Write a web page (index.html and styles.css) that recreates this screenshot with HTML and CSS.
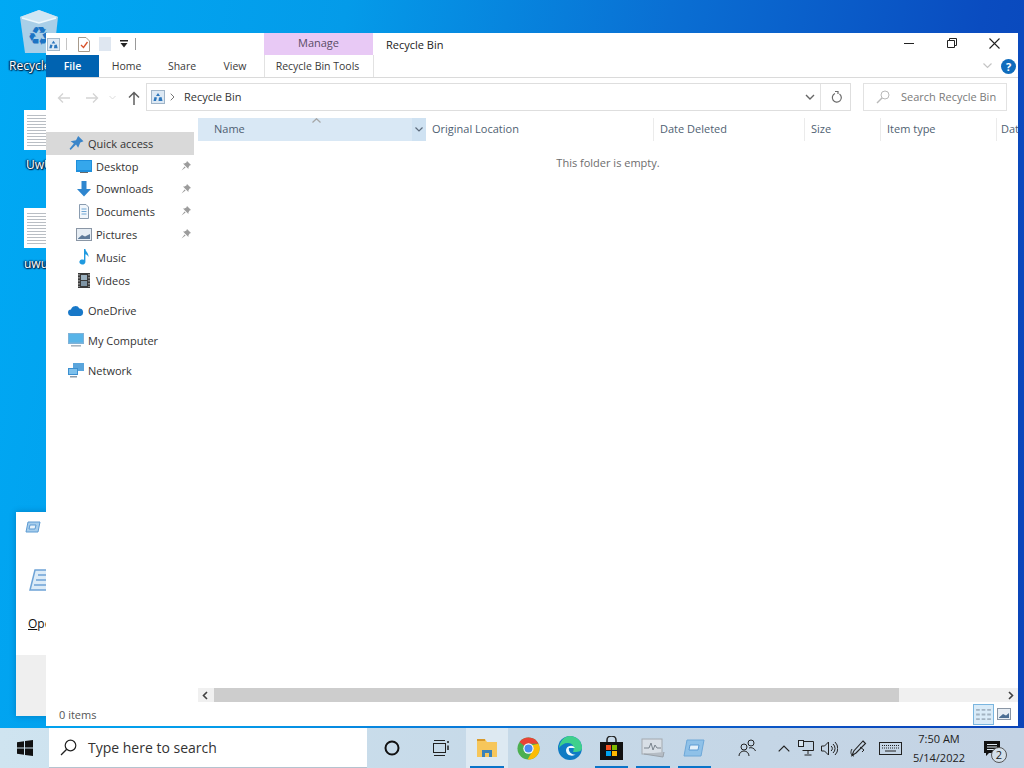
FILE: index.html
```html
<!DOCTYPE html>
<html lang="en">
<head>
    <meta charset="UTF-8">
    <meta name="viewport" content="width=device-width, initial-scale=1.0">
    <title>Recycle Bin</title>
    <link rel="stylesheet" href="styles.css">
</head>
<body>
    <div class="desktop">
        <div class="desk-icon bin-icon">
            <svg width="40" height="46" viewBox="0 0 40 46">
                <path d="M1 8 L20 1 L39 8 L35 44 L6 44 Z" fill="#a9cfe8"/>
                <path d="M1 8 L20 1 L39 8 L20 14 Z" fill="#cfe6f4"/>
                <path d="M3 9 L20 14 L37 9" fill="none" stroke="#eef8fd" stroke-width="1.5"/>
                <text class="bin-glyph" x="20" y="36" text-anchor="middle">♻</text>
            </svg>
            <span class="desk-label">Recycle</span>
        </div>
        <div class="desk-icon doc-one">
            <div class="doc-page"></div>
            <span class="desk-label">UwU</span>
        </div>
        <div class="desk-icon doc-two">
            <div class="doc-page"></div>
            <span class="desk-label">uwu</span>
        </div>

        <div class="dialog">
            <div class="dialog-title">
                <svg width="16" height="12" viewBox="0 0 16 12"><path d="M3 1 H15 L13 11 H1 Z" fill="#a6cdec" stroke="#5d9bd3"/><path d="M5 4 H11 L10 8 H4 Z" fill="#e8f3fb" stroke="#5d9bd3"/></svg>
            </div>
            <div class="dialog-body">
                <svg width="24" height="22" viewBox="0 0 24 22"><path d="M6 1 H24 V21 H1 Z" fill="#dcebf7" stroke="#6ea3d6" stroke-width="1.5"/><path d="M9 6 H24 M7 11 H24 M5 16 H24" stroke="#6ea3d6" stroke-width="1.5"/></svg>
                <p class="dialog-text"><u>O</u>pen</p>
            </div>
            <div class="dialog-footer"></div>
        </div>

        <div class="explorer">
            <div class="title-row">
                <div class="qat">
                    <svg width="13" height="13" viewBox="0 0 14 14"><use href="#mini-bin"/></svg>
                    <span class="qat-sep qat-sep-a"></span>
                    <svg class="qat-props" width="12" height="15" viewBox="0 0 12 15"><path d="M.5.5 H8 L11.5 4 V14.5 H.5 Z" fill="#fff" stroke="#a89b8c"/><path d="M3 8 L5.5 10.5 L9.5 5" fill="none" stroke="#d9532c" stroke-width="1.3"/></svg>
                    <span class="qat-blank"></span>
                    <svg class="qat-drop" width="8" height="8" viewBox="0 0 8 8"><path d="M0 0 H8 V1.4 H0 Z M.5 3 H7.5 L4 7.5 Z" fill="#222"/></svg>
                    <span class="qat-sep qat-sep-b"></span>
                </div>
                <div class="manage-tab">Manage</div>
                <div class="window-title">Recycle Bin</div>
                <div class="window-controls">
                    <svg width="10" height="10" viewBox="0 0 10 10"><path d="M0 5.5 H10" stroke="#222"/></svg>
                    <svg width="10" height="10" viewBox="0 0 10 10"><path d="M.5 2.5 H7.5 V9.5 H.5 Z M2.5 2.5 V.5 H9.5 V7.5 H7.5" fill="none" stroke="#222"/></svg>
                    <svg width="11" height="11" viewBox="0 0 11 11"><path d="M.5 .5 L10.5 10.5 M10.5 .5 L.5 10.5" stroke="#222" stroke-width="1.1"/></svg>
                </div>
            </div>

            <div class="tab-row">
                <div class="file-tab">File</div>
                <div class="tab tab-home">Home</div>
                <div class="tab tab-share">Share</div>
                <div class="tab tab-view">View</div>
                <div class="tools-tab">Recycle Bin Tools</div>
                <div class="tab-right">
                    <svg width="9" height="6" viewBox="0 0 9 6"><path d="M.5 .5 L4.5 4.5 L8.5 .5" fill="none" stroke="#c4c4c4" stroke-width="1.2"/></svg>
                    <span class="help-btn">?</span>
                </div>
            </div>

            <div class="address-row">
                <div class="nav-btns">
                    <svg width="14" height="12" viewBox="0 0 14 12"><path d="M13 6 H2 M6 1.5 L1.5 6 L6 10.5" fill="none" stroke="#d4d4d4" stroke-width="1.4"/></svg>
                    <svg width="14" height="12" viewBox="0 0 14 12"><path d="M1 6 H12 M8 1.5 L12.5 6 L8 10.5" fill="none" stroke="#d4d4d4" stroke-width="1.4"/></svg>
                    <svg width="7" height="5" viewBox="0 0 7 5"><path d="M.5 1 L3.5 4 L6.5 1" fill="none" stroke="#dcdcdc"/></svg>
                    <svg width="12" height="14" viewBox="0 0 12 14"><path d="M6 14 V2 M1 6.5 L6 1.5 L11 6.5" fill="none" stroke="#5f5f5f" stroke-width="1.5"/></svg>
                </div>
                <div class="address-box">
                    <svg width="14" height="14" viewBox="0 0 14 14"><use href="#mini-bin"/></svg>
                    <svg class="crumb-arrow" width="5" height="8" viewBox="0 0 5 8"><path d="M.7 .7 L4 4 L.7 7.3" fill="none" stroke="#777"/></svg>
                    <span class="crumb">Recycle Bin</span>
                    <svg class="address-drop" width="10" height="6" viewBox="0 0 10 6"><path d="M1 1 L5 5 L9 1" fill="none" stroke="#666" stroke-width="1.4"/></svg>
                    <span class="refresh">
                        <svg width="12" height="13" viewBox="0 0 12 13"><path d="M4 2.5 A4.5 4.5 0 1 0 8.5 3 M4 .5 L7 .5 L7 3" transform="translate(0 1)" fill="none" stroke="#6a6a6a" stroke-width="1.2"/></svg>
                    </span>
                </div>
                <div class="search-box">
                    <svg width="14" height="14" viewBox="0 0 14 14"><circle cx="9" cy="5" r="4" fill="none" stroke="#b9b9b9"/><path d="M6 8 L1 13" stroke="#b9b9b9" stroke-width="1.4"/></svg>
                    <span>Search Recycle Bin</span>
                </div>
            </div>

            <div class="main">
                <nav class="sidebar">
                    <div class="nav-item top active">
                        <svg width="16" height="15" viewBox="0 0 14 14"><path d="M9 0 L14 5 L11 6 L9 11 L7 8 L2 13 L1 12 L5 7 L2 5 L7 4 Z" fill="#3a85c9"/></svg>
                        Quick access
                    </div>
                    <div class="nav-item sub">
                        <svg width="16" height="13" viewBox="0 0 16 13"><rect width="16" height="12" fill="#1f8fdc"/><rect x="1" y="1" width="14" height="9" fill="#35a7ec"/><rect x="4" y="12" width="8" height="1" fill="#6a6a6a"/></svg>
                        Desktop
                        <svg class="pin" width="10" height="10" viewBox="0 0 10 10"><use href="#pin"/></svg>
                    </div>
                    <div class="nav-item sub">
                        <svg width="16" height="16" viewBox="0 0 16 16"><path d="M5.5 0 H10.5 V8 H15 L8 15.5 L1 8 H5.5 Z" fill="#2e86cf"/></svg>
                        Downloads
                        <svg class="pin" width="10" height="10" viewBox="0 0 10 10"><use href="#pin"/></svg>
                    </div>
                    <div class="nav-item sub">
                        <svg width="16" height="15" viewBox="0 0 16 15"><path d="M3.5 .5 H10 L12.5 3 V14.5 H3.5 Z" fill="#f1f6fb" stroke="#8a9cb0"/><path d="M5.5 5 H10.5 M5.5 7.5 H10.5 M5.5 10 H10.5" stroke="#6fa5d3"/></svg>
                        Documents
                        <svg class="pin" width="10" height="10" viewBox="0 0 10 10"><use href="#pin"/></svg>
                    </div>
                    <div class="nav-item sub">
                        <svg width="16" height="13" viewBox="0 0 16 13"><rect x=".5" y=".5" width="15" height="12" fill="#e6edf4" stroke="#8a96a5"/><path d="M2 10.5 L6 7 L9 8.5 L14 6 V11 H2 Z" fill="#5e7a99"/></svg>
                        Pictures
                        <svg class="pin" width="10" height="10" viewBox="0 0 10 10"><use href="#pin"/></svg>
                    </div>
                    <div class="nav-item sub">
                        <svg width="16" height="16" viewBox="0 0 16 16"><path d="M8 0 H9.4 C9.6 3 13 4 12.4 8 C11.6 6 10.5 5.4 9.4 5.2 V13 A3 2.6 0 1 1 8 10.8 Z" fill="#1f9ae0"/></svg>
                        Music
                    </div>
                    <div class="nav-item sub">
                        <svg width="16" height="15" viewBox="0 0 16 15"><rect x="2" width="12" height="15" fill="#3a3a3a"/><rect x="5" y="2" width="6" height="5" fill="#9ab0bf"/><rect x="5" y="8" width="6" height="5" fill="#7f95a5"/><path d="M3 1 V14 M13 1 V14" stroke="#ccc" stroke-dasharray="1.5 1.5"/></svg>
                        Videos
                    </div>
                    <div class="nav-item top group">
                        <svg width="16" height="11" viewBox="0 0 16 11"><path d="M3.5 11 A3.2 3.2 0 0 1 3 4.6 A4.5 4.5 0 0 1 11.4 3.6 A3.8 3.8 0 0 1 12.5 11 Z" fill="#1878c8"/></svg>
                        OneDrive
                    </div>
                    <div class="nav-item top group">
                        <svg width="16" height="15" viewBox="0 0 16 15"><rect width="16" height="11" fill="#7fb2d8"/><rect x="1" y="1" width="14" height="8.5" fill="#58b4e8"/><rect x="3" y="12" width="10" height="1.6" fill="#a8b5c0"/></svg>
                        My Computer
                    </div>
                    <div class="nav-item top group">
                        <svg width="16" height="15" viewBox="0 0 16 15"><rect x="5" y="0" width="11" height="8" fill="#5aa5dc"/><rect x="0" y="5" width="10" height="7" fill="#3c8fd0"/><rect x="1" y="6" width="8" height="5" fill="#7cc0ec"/><rect x="2" y="13" width="7" height="1.5" fill="#8a9aa8"/></svg>
                        Network
                    </div>
                </nav>

                <div class="pane">
                    <div class="col-head">
                        <div class="col col-name">
                            <span>Name</span>
                            <span class="col-drop">
                                <svg width="8" height="5" viewBox="0 0 8 5"><path d="M.5 .5 L4 4 L7.5 .5" fill="none" stroke="#5c6b7c" stroke-width="1.2"/></svg>
                            </span>
                            <svg class="sort-caret" width="9" height="5" viewBox="0 0 9 5"><path d="M.5 4.5 L4.5 .7 L8.5 4.5" fill="none" stroke="#a6a6a6" stroke-width="1.2"/></svg>
                        </div>
                        <div class="col col-loc">Original Location</div>
                        <div class="col col-date">Date Deleted</div>
                        <div class="col col-size">Size</div>
                        <div class="col col-type">Item type</div>
                        <div class="col col-more">Dat</div>
                    </div>
                    <div class="pane-body">This folder is empty.</div>
                    <div class="h-scroll">
                        <svg width="6" height="9" viewBox="0 0 6 9"><path d="M5 1 L1.5 4.5 L5 8" fill="none" stroke="#404040" stroke-width="1.6"/></svg>
                        <div class="h-track"><div class="h-thumb"></div></div>
                        <svg width="6" height="9" viewBox="0 0 6 9"><path d="M1 1 L4.5 4.5 L1 8" fill="none" stroke="#404040" stroke-width="1.6"/></svg>
                    </div>
                </div>
            </div>

            <div class="status-row">
                <span>0 items</span>
                <div class="view-btns">
                    <span class="view-btn selected">
                        <svg width="15" height="13" viewBox="0 0 16 14"><path d="M0 2 H4 M6 2 H10 M12 2 H16 M0 7 H4 M6 7 H10 M12 7 H16 M0 12 H4 M6 12 H10 M12 12 H16" stroke="#a3b4c2" stroke-width="2"/></svg>
                    </span>
                    <span class="view-btn small">
                        <svg width="14" height="12" viewBox="0 0 14 12"><rect x=".5" y=".5" width="13" height="11" fill="#e8eef4" stroke="#8a96a5"/><path d="M2 9.5 L6 6 L9 7.5 L12 5 V10 H2 Z" fill="#4d6f94"/></svg>
                    </span>
                </div>
            </div>
        </div>

        <div class="taskbar">
            <div class="start">
                <svg width="16" height="16" viewBox="0 0 16 16"><path d="M0 2.2 L7 1.2 V7.5 H0 Z M8 1 L16 0 V7.5 H8 Z M0 8.5 H7 V14.8 L0 13.8 Z M8 8.5 H16 V16 L8 15 Z" fill="#111"/></svg>
            </div>
            <div class="task-search">
                <svg width="17" height="17" viewBox="0 0 17 17"><circle cx="10.5" cy="6.5" r="5.3" fill="none" stroke="#222" stroke-width="1.2"/><path d="M6.7 10.3 L1 16" stroke="#222" stroke-width="1.3"/></svg>
                <span>Type here to search</span>
            </div>
            <div class="task-btn wide">
                <svg width="16" height="16" viewBox="0 0 16 16"><circle cx="8" cy="8" r="6.5" fill="none" stroke="#111" stroke-width="2"/></svg>
            </div>
            <div class="task-btn view">
                <svg width="17" height="16" viewBox="0 0 17 16"><path d="M2 .5 H13 M2 15.5 H13" stroke="#222"/><rect x="1.5" y="3.5" width="12" height="9" fill="none" stroke="#222"/><path d="M16 1 V3 M16 5.5 V10" stroke="#222" stroke-width="1.5"/></svg>
            </div>
            <div class="task-btn app active">
                <svg width="22" height="20" viewBox="0 0 22 20"><path d="M1 1 H9 L11 4 H21 V19 H1 Z" fill="#f6c65b"/><rect x="1" y="1" width="8" height="2" fill="#d89a2c"/><path d="M6 19 V12 H16 V19 H13 V15 H9 V19 Z" fill="#3a82b8"/></svg>
            </div>
            <div class="task-btn app">
                <svg width="23" height="23" viewBox="0 0 24 24"><circle cx="12" cy="12" r="11.5" fill="#4caf50"/><path d="M12 .5 A11.5 11.5 0 0 1 22.4 7 H12 A5 5 0 0 0 7.7 9.5 L2.6 5.2 A11.5 11.5 0 0 1 12 .5 Z" fill="#e94335"/><path d="M22.4 7 A11.5 11.5 0 0 1 11 23.4 L16.2 14.6 A5 5 0 0 0 15.5 8.5 Z" fill="#fbbc05"/><circle cx="12" cy="12" r="5.4" fill="#fff"/><circle cx="12" cy="12" r="4.2" fill="#4a8bf0"/></svg>
            </div>
            <div class="task-btn app">
                <svg width="24" height="24" viewBox="0 0 24 24"><circle cx="12" cy="12" r="12" fill="#0f7bc4"/><path d="M12 0 A12 12 0 0 1 24 12 C24 16 19 16 15 16 C17 12 15 7 10 7 C6 7 3 9 1 12 C2 5 6 0 12 0 Z" fill="#3fd08c"/><path d="M8 14 A5 5 0 0 1 17 12 H11 C10 15 13 19 18 18.6 C14 21 8 19.5 8 14 Z" fill="#eef9ff"/></svg>
            </div>
            <div class="task-btn app running">
                <svg width="23" height="24" viewBox="0 0 23 24"><path d="M7 6 V4 A4.5 4 0 0 1 16 4 V6" fill="none" stroke="#222" stroke-width="1.5"/><rect y="6" width="23" height="18" fill="#111"/><rect x="6" y="9" width="5" height="5" fill="#f25022"/><rect x="12" y="9" width="5" height="5" fill="#7fba00"/><rect x="6" y="15" width="5" height="5" fill="#00a4ef"/><rect x="12" y="15" width="5" height="5" fill="#ffb900"/></svg>
            </div>
            <div class="task-btn app running">
                <svg width="24" height="22" viewBox="0 0 24 22"><rect x="1" y="2" width="20" height="15" fill="#d8dfe6" stroke="#a4aab0"/><path d="M3 11 H8 L10 6 L12 13 L14 8 L16 11 H20" fill="none" stroke="#7a848e"/><path d="M3 17 L22 20 L23 15" fill="#b5bcc4" stroke="#9aa2aa"/></svg>
            </div>
            <div class="task-btn app running">
                <svg width="22" height="18" viewBox="0 0 22 18"><path d="M4 1 H21 L18 17 H1 Z" fill="#8fc1e8" stroke="#6ea8d8"/><path d="M7 6 H16 L15 11 H6 Z" fill="#e5f1fa" stroke="#5d9bd3"/></svg>
            </div>
            <div class="tray">
                <svg class="tray-people" width="18" height="18" viewBox="0 0 18 18"><circle cx="6" cy="8" r="3" fill="none" stroke="#222"/><path d="M1 17 A5 5 0 0 1 11 17" fill="none" stroke="#222"/><circle cx="13" cy="4" r="3" fill="none" stroke="#222"/><path d="M11 9 A5 5 0 0 1 17.5 12" fill="none" stroke="#222"/></svg>
                <svg class="tray-chev" width="12" height="7" viewBox="0 0 12 7"><path d="M.7 6.3 L6 1 L11.3 6.3" fill="none" stroke="#222" stroke-width="1.2"/></svg>
                <svg class="tray-net" width="16" height="16" viewBox="0 0 16 16"><path d="M4.5 1.5 H15.5 V10.5 H4.5" fill="none" stroke="#222"/><rect x=".5" y=".5" width="5" height="6" fill="#d7e5f0" stroke="#222"/><path d="M10 10.5 V14 M6.5 15 H13.5" stroke="#222"/></svg>
                <svg class="tray-vol" width="17" height="15" viewBox="0 0 17 15"><path d="M.5 5 H3.5 L7.5 1 V14 L3.5 10 H.5 Z" fill="none" stroke="#222"/><path d="M10 5 A3 3 0 0 1 10 10 M12 3 A6 6 0 0 1 12 12 M14 1 A9 9 0 0 1 14 14" fill="none" stroke="#222"/></svg>
                <svg class="tray-pen" width="17" height="17" viewBox="0 0 17 17"><path d="M13 1 L15.5 3.5 L6 13 L2 15.5 L3.8 11 Z" fill="none" stroke="#222" stroke-width="1.1"/><path d="M2 9 C0 12 1 16 4 16 M10 7 L14 10 L12 12" fill="none" stroke="#222"/></svg>
                <svg class="tray-keys" width="23" height="13" viewBox="0 0 23 13"><rect x=".5" y=".5" width="22" height="12" fill="none" stroke="#222"/><path d="M3 3.5 H20 M3 6 H20" stroke="#222" stroke-dasharray="1 1"/><path d="M6 9 H17" stroke="#222"/></svg>
                <div class="clock">
                    <span>7:50 AM</span>
                    <span>5/14/2022</span>
                </div>
                <div class="action-center">
                    <svg width="16" height="15" viewBox="0 0 16 15"><path d="M0 0 H16 V12 H5 L2 15 V12 H0 Z" fill="#111"/><path d="M3 3.5 H13 M3 6 H13 M3 8.5 H10" stroke="#dde8f0"/></svg>
                    <span class="action-badge">2</span>
                </div>
            </div>
        </div>
    </div>

    <svg class="defs" width="0" height="0">
        <symbol id="mini-bin" viewBox="0 0 14 14">
            <rect x=".5" y=".5" width="13" height="13" fill="#dde9f4" stroke="#9fb4c8"/>
            <path d="M7 3 L9 6 H5 Z M3.5 7 L6 7.5 L5 11 H2.5 Z M10.5 7 L11.5 11 H7.5 L8 7.5 Z" fill="#2d77bd"/>
        </symbol>
        <symbol id="pin" viewBox="0 0 10 10">
            <path d="M6 0 L10 4 L8.6 4.6 L7.4 6.6 L7.4 8 L2 2.6 L3.4 2.6 L5.4 1.4 Z M3.6 5.4 L.5 9.5 L4.6 6.4 Z" fill="#9c9c9c"/>
        </symbol>
    </svg>
</body>
</html>
```

FILE: styles.css
```css
* {
    margin: 0;
    padding: 0;
    box-sizing: border-box;
    font-family: 'Open Sans', 'Noto Sans', sans-serif;
}

html, body {
    width: 1024px;
    height: 768px;
    overflow: hidden;
}

svg {
    display: block;
    flex-shrink: 0;
}

.defs {
    position: absolute;
}

.desktop {
    position: relative;
    width: 1024px;
    height: 768px;
    overflow: hidden;
    background:
        linear-gradient(100deg, #00a9f4 0%, #049be9 30%, #0a6fd3 58%, #0a4cc0 85%, #0a44b8 100%);
}

/* Desktop icons, free canvas */
.desk-icon {
    position: absolute;
}

.bin-icon {
    left: 19px;
    top: 9px;
}

.bin-glyph {
    font-family: 'DejaVu Sans', sans-serif;
    font-size: 26px;
    fill: #1c74c4;
}

.doc-one {
    left: 24px;
    top: 110px;
}

.doc-two {
    left: 24px;
    top: 208px;
}

.desk-label {
    position: absolute;
    white-space: nowrap;
    font-size: 12px;
    line-height: 14px;
    color: #fff;
    text-shadow: 0 0 2px #03264a, 0 0 2px #03264a, 1px 1px 1px #03264a, -1px 0 1px #03264a;
}

.bin-icon .desk-label {
    top: 50px;
    left: -10px;
}

.doc-one .desk-label {
    top: 48px;
    left: 2px;
}

.doc-two .desk-label {
    top: 49px;
    left: 0;
}

.doc-page {
    width: 32px;
    height: 40px;
    background: repeating-linear-gradient(#fff 0, #fff 2px, #b9bec4 2px, #b9bec4 3px);
    border: 3px solid #fff;
}

/* Dialog behind the explorer */
.dialog {
    position: absolute;
    left: 16px;
    top: 512px;
    width: 200px;
    height: 204px;
    background: #fff;
    display: flex;
    flex-direction: column;
    box-shadow: 0 0 6px rgba(0, 40, 90, 0.3);
}

.dialog-title {
    height: 30px;
    padding: 9px 9px 0;
}

.dialog-body {
    flex: 1;
    padding: 27px 12px 0 13px;
}

.dialog-text {
    margin-top: 24px;
    margin-left: -1px;
    font-size: 12px;
    color: #111;
}

.dialog-footer {
    height: 61px;
    background: #efefef;
}

/* Explorer window */
.explorer {
    position: absolute;
    left: 46px;
    top: 33px;
    width: 972px;
    height: 693px;
    background: #fff;
    display: flex;
    flex-direction: column;
    overflow: hidden;
    color: #3a3a3a;
    font-size: 11px;
}

.title-row {
    height: 22px;
    display: flex;
    align-items: center;
    flex-shrink: 0;
}

.qat {
    width: 218px;
    height: 22px;
    display: flex;
    align-items: center;
    padding-left: 1px;
}

.qat-sep {
    width: 1px;
    height: 12px;
    background: #c4c4c4;
}

.qat-sep-a {
    margin-left: 6px;
}

.qat-props {
    margin-left: 11px;
}

.qat-blank {
    width: 12px;
    height: 14px;
    margin-left: 9px;
    background: #dfe7f1;
}

.qat-drop {
    margin-left: 9px;
}

.qat-sep-b {
    margin-left: 7px;
    background: #999;
}

.manage-tab {
    width: 109px;
    height: 22px;
    line-height: 20px;
    text-align: center;
    background: #e8c9f5;
    color: #5a4d66;
}

.window-title {
    margin-left: 13px;
    color: #222;
}

.window-controls {
    margin-left: auto;
    width: 130px;
    display: flex;
    align-items: center;
    justify-content: space-between;
    padding: 0 18px 2px 16px;
}

.tab-row {
    height: 23px;
    display: flex;
    align-items: center;
    border-bottom: 1px solid #dadada;
    flex-shrink: 0;
    font-size: 10.5px;
}

.file-tab {
    width: 53px;
    height: 22px;
    line-height: 22px;
    text-align: center;
    background: #0063b1;
    color: #fff;
    font-weight: 600;
}

.tab {
    width: 56px;
    text-align: center;
}

.tab-home {
    width: 55px;
}

.tab-view {
    width: 54px;
    padding-right: 4px;
}

.tools-tab {
    width: 110px;
    height: 22px;
    line-height: 22px;
    text-align: center;
    padding-right: 3px;
    border-left: 1px solid #e2e2e2;
    border-right: 1px solid #e2e2e2;
}

.tab-right {
    margin-left: auto;
    display: flex;
    align-items: center;
    gap: 9px;
    padding-right: 2px;
}

.help-btn {
    width: 15px;
    height: 15px;
    border-radius: 50%;
    background: #0f6cbd;
    color: #fff;
    font-size: 11px;
    font-weight: 700;
    line-height: 15px;
    text-align: center;
}

.address-row {
    height: 33px;
    display: flex;
    align-items: flex-end;
    flex-shrink: 0;
}

.nav-btns {
    width: 100px;
    height: 27px;
    display: flex;
    align-items: center;
    padding-left: 11px;
}

.nav-btns svg:nth-child(2) {
    margin-left: 14px;
}

.nav-btns svg:nth-child(3) {
    margin-left: 10px;
}

.nav-btns svg:nth-child(4) {
    margin-left: 12px;
}

.address-box {
    width: 705px;
    height: 28px;
    border: 1px solid #dedede;
    display: flex;
    align-items: center;
    padding: 0 0 1px 4px;
    color: #333;
}

.crumb-arrow {
    margin-left: 5px;
}

.crumb {
    margin-left: 9px;
}

.address-drop {
    margin-left: auto;
    margin-right: 5px;
}

.refresh {
    width: 30px;
    height: 26px;
    border-left: 1px solid #e2e2e2;
    display: flex;
    align-items: center;
    justify-content: center;
    padding-left: 2px;
}

.search-box {
    width: 144px;
    height: 28px;
    margin-left: 12px;
    border: 1px solid #e2e2e2;
    display: flex;
    align-items: center;
    padding: 0 0 1px 12px;
    gap: 11px;
    color: #7a7a7a;
}

.search-box span {
    white-space: nowrap;
}

.main {
    flex: 1;
    display: flex;
    min-height: 0;
    padding-top: 4px;
}

/* Navigation pane */
.sidebar {
    width: 152px;
    padding: 17px 4px 0 0;
    flex-shrink: 0;
}

.nav-item {
    position: relative;
    height: 22.8px;
    display: flex;
    align-items: center;
    color: #333;
    white-space: nowrap;
}

.nav-item.top {
    padding-left: 22px;
    gap: 4px;
}

.nav-item.sub {
    padding-left: 30px;
    gap: 4px;
}

.nav-item.active {
    background: #d9d9d9;
}

.nav-item.group {
    margin-top: 7.2px;
}

.pin {
    position: absolute;
    right: 3px;
    top: 6px;
}

/* Detail pane */
.pane {
    flex: 1;
    min-width: 0;
    display: flex;
    flex-direction: column;
}

.col-head {
    height: 23px;
    margin-top: 3px;
    display: flex;
    flex-shrink: 0;
    color: #4f5f72;
}

.col {
    height: 23px;
    line-height: 22px;
    flex-shrink: 0;
    white-space: nowrap;
    border-right: 1px solid #ebebeb;
    padding-left: 6px;
    overflow: hidden;
}

.col-name {
    position: relative;
    width: 228px;
    padding-left: 16px;
    background: #d9e8f5;
    border-right: 0;
    display: flex;
    justify-content: space-between;
}

.col-drop {
    width: 14px;
    height: 23px;
    background: #cfe2f2;
    display: flex;
    align-items: center;
    justify-content: center;
}

.sort-caret {
    position: absolute;
    left: 114px;
    top: 0;
}

.col-loc {
    width: 228px;
}

.col-date {
    width: 151px;
}

.col-size {
    width: 76px;
}

.col-type {
    width: 116px;
}

.col-more {
    width: 21px;
    padding-left: 4px;
    border-right: 0;
}

.pane-body {
    flex: 1;
    padding-top: 14px;
    padding-right: 0;
    text-align: center;
    color: #6d6d6d;
}

.h-scroll {
    height: 14px;
    display: flex;
    align-items: center;
    padding: 0 4px;
    gap: 6px;
    background: #f0f0f0;
    flex-shrink: 0;
}

.h-track {
    flex: 1;
    height: 14px;
}

.h-thumb {
    width: 685px;
    height: 14px;
    background: #cdcdcd;
}

.status-row {
    height: 24px;
    display: flex;
    align-items: center;
    justify-content: space-between;
    padding: 0 6px 0 13px;
    flex-shrink: 0;
    color: #555;
}

.view-btns {
    display: flex;
    gap: 2px;
}

.view-btn {
    width: 21px;
    height: 21px;
    display: flex;
    align-items: center;
    justify-content: center;
}

.view-btn.small {
    width: 16px;
}

.view-btn.selected {
    background: #d9ebf8;
    border: 1px solid #7ab6e0;
}

/* Taskbar */
.taskbar {
    position: absolute;
    left: 0;
    top: 728px;
    width: 1024px;
    height: 40px;
    display: flex;
    align-items: stretch;
    background: linear-gradient(90deg, #cfe4f0, #c6d9e8 50%, #c4d3e4);
}

.start {
    width: 49px;
    display: flex;
    align-items: center;
    justify-content: center;
}

.task-search {
    width: 318px;
    background: #fff;
    display: flex;
    align-items: center;
    padding-left: 11px;
    gap: 11px;
    border-bottom: 1px solid #b5c3cf;
    font-size: 14px;
    color: #333;
}

.task-btn {
    display: flex;
    align-items: center;
    justify-content: center;
    position: relative;
}

.task-btn.wide {
    width: 50px;
}

.task-btn.view {
    width: 49px;
    padding-right: 3px;
}

.task-btn.app {
    width: 41.5px;
}

.task-btn.active {
    background: #dde9f2;
}

.task-btn.active::after,
.task-btn.running::after {
    content: "";
    position: absolute;
    left: 4px;
    right: 4px;
    bottom: 0;
    height: 2px;
    background: #0a74c9;
}

.tray {
    margin-left: auto;
    display: flex;
    align-items: center;
    color: #222;
}

.tray-people {
    margin-right: 22px;
}

.tray-chev {
    margin-right: 8px;
}

.tray-net {
    margin-right: 7px;
}

.tray-vol {
    margin-right: 12px;
}

.tray-pen {
    margin-right: 12px;
}

.tray-keys {
    margin-right: 3px;
}

.clock {
    width: 68px;
    display: flex;
    flex-direction: column;
    align-items: center;
    font-size: 11px;
    line-height: 19px;
}

.action-center {
    position: relative;
    width: 51px;
    height: 40px;
    display: flex;
    align-items: center;
    justify-content: center;
    padding-right: 14px;
}

.action-badge {
    position: absolute;
    left: 18px;
    top: 19px;
    width: 16px;
    height: 16px;
    border: 1px solid #555;
    border-radius: 50%;
    background: #d3dfe9;
    font-size: 11px;
    line-height: 14px;
    text-align: center;
}
```
